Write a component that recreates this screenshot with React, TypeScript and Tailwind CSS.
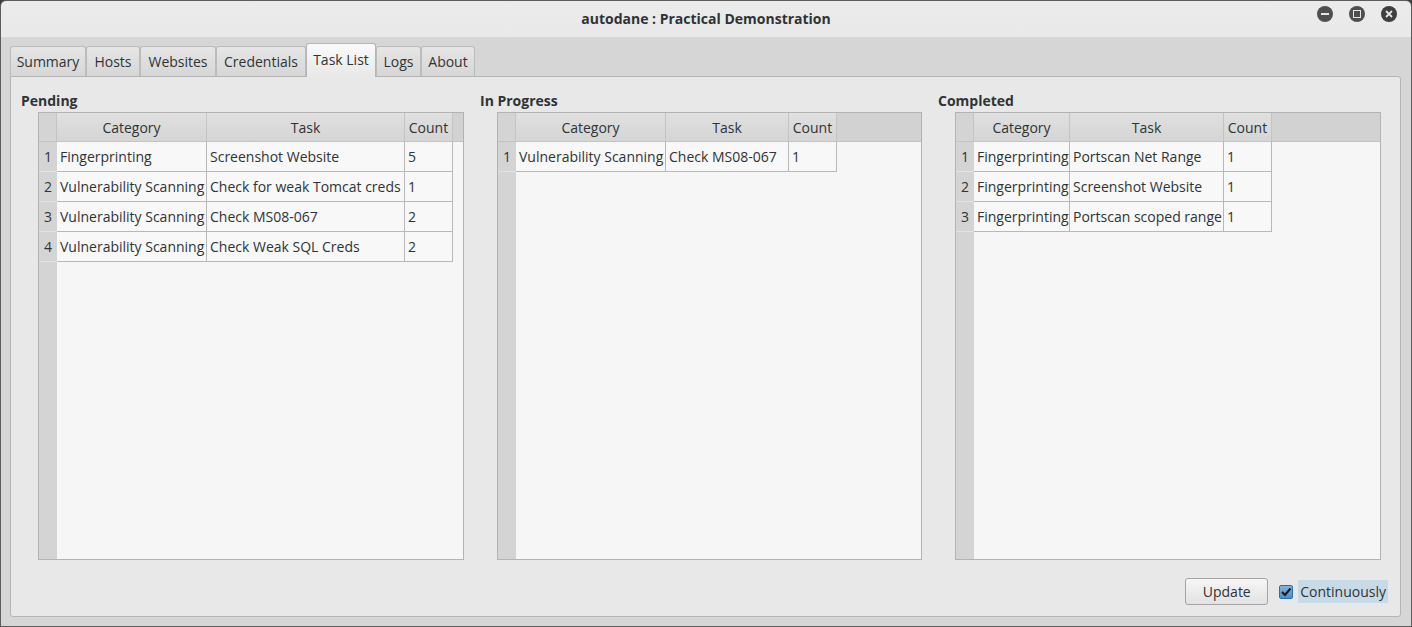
import React from "react";

type Row = { cat: string; task: string; count: string };

/* ------------------------------------------------------------------ */
/*  Data                                                               */
/* ------------------------------------------------------------------ */
const TABS: { label: string; w: number }[] = [
    { label: "Summary", w: 76 },
    { label: "Hosts", w: 54 },
    { label: "Websites", w: 76 },
    { label: "Credentials", w: 90 },
    { label: "Task List", w: 70 },
    { label: "Logs", w: 45 },
    { label: "About", w: 54 },
];

const PENDING: Row[] = [
    { cat: "Fingerprinting", task: "Screenshot Website", count: "5" },
    { cat: "Vulnerability Scanning", task: "Check for weak Tomcat creds", count: "1" },
    { cat: "Vulnerability Scanning", task: "Check MS08-067", count: "2" },
    { cat: "Vulnerability Scanning", task: "Check Weak SQL Creds", count: "2" },
];
const PROGRESS: Row[] = [{ cat: "Vulnerability Scanning", task: "Check MS08-067", count: "1" }];
const DONE: Row[] = [
    { cat: "Fingerprinting", task: "Portscan Net Range", count: "1" },
    { cat: "Fingerprinting", task: "Screenshot Website", count: "1" },
    { cat: "Fingerprinting", task: "Portscan scoped range", count: "1" },
];

/* ------------------------------------------------------------------ */
/*  Task table (QTableWidget look)                                     */
/* ------------------------------------------------------------------ */
function TaskTable({ rows, cols }: { rows: Row[]; cols: [number, number, number] }) {
    return (
        <div className="flex flex-col h-[448px] border border-[#b3b3b3] bg-[#f6f6f6] overflow-hidden">
            {/* header */}
            <div className="flex h-[29px] shrink-0 bg-gradient-to-b from-[#e0e0e0] to-[#d5d5d5] border-b border-[#c4c4c4]">
                <div className="w-[18px] shrink-0 bg-[#d4d4d4] border-r border-[#c4c4c4]" />
                {["Category", "Task", "Count"].map((h, i) => (
                    <div key={h}
                        className="shrink-0 flex items-center justify-center border-r border-[#c4c4c4] text-[#2e3436]"
                        style={{ width: cols[i] }}>
                        {h}
                    </div>
                ))}
                <div className="flex-1 bg-[#d2d2d2]" />
            </div>

            {/* rows */}
            {rows.map((r, i) => (
                <div key={i} className="flex h-[30px] shrink-0">
                    <div className="w-[18px] shrink-0 flex items-center justify-center bg-[#d4d4d4] border-b border-[#e2e2e2] text-[#2e3436]">
                        {i + 1}
                    </div>
                    {[r.cat, r.task, r.count].map((v, j) => (
                        <div key={j}
                            className="shrink-0 flex items-center pl-[3px] bg-[#f8f8f8] border-r border-b border-[#b8b8b8] text-[#2e3436] whitespace-nowrap"
                            style={{ width: cols[j] }}>
                            {v}
                        </div>
                    ))}
                </div>
            ))}

            {/* empty area */}
            <div className="flex flex-1">
                <div className="w-[18px] shrink-0 bg-[#d4d4d4]" />
            </div>
        </div>
    );
}

function Section({ title, rows, cols }: { title: string; rows: Row[]; cols: [number, number, number] }) {
    return (
        <div className="flex flex-col">
            <div className="h-[23px] font-bold text-[#2e3436] leading-[23px] -mt-[1px]">{title}</div>
            <div className="pl-[17px]">
                <TaskTable rows={rows} cols={cols} />
            </div>
        </div>
    );
}

/* ------------------------------------------------------------------ */
/*  Window                                                             */
/* ------------------------------------------------------------------ */
export default function App() {
    return (
        <div className="w-[1412px] h-[627px] overflow-hidden bg-[#3c3c3c] text-[14px]"
            style={{ fontFamily: "'Open Sans', 'Noto Sans', sans-serif" }}>
            <div className="relative w-full h-full flex flex-col rounded-t-[6px] border border-[#5c5c5c] bg-gradient-to-b from-[#ebebeb] via-[#dadada] to-[#d6d6d6]">

                {/* ========== TITLE BAR ========== */}
                <div className="h-[36px] shrink-0 flex items-center justify-center relative">
                    <span className="font-bold text-[#2e3436] text-[14px] -mt-[1px]">autodane : Practical Demonstration</span>
                    <div className="absolute right-[14px] top-[5px] flex gap-[16px]">
                        {/* minimize */}
                        <div className="w-[16px] h-[16px] rounded-full bg-[#4f4f4f] flex items-center justify-center">
                            <div className="w-[8px] h-[2px] bg-[#e5e5e5]" />
                        </div>
                        {/* maximize */}
                        <div className="w-[16px] h-[16px] rounded-full bg-[#4f4f4f] flex items-center justify-center">
                            <div className="w-[8px] h-[8px] border-[1.5px] border-[#e5e5e5]" />
                        </div>
                        {/* close */}
                        <div className="w-[16px] h-[16px] rounded-full bg-[#3f3f3f] flex items-center justify-center">
                            <svg width="8" height="8" viewBox="0 0 8 8">
                                <path d="M1 1 L7 7 M7 1 L1 7" stroke="#e5e5e5" strokeWidth="1.8" />
                            </svg>
                        </div>
                    </div>
                </div>

                {/* ========== TABS ========== */}
                <div className="flex items-end h-[39px] shrink-0 pl-[9px] bg-[#d6d6d6]">
                    {TABS.map((t) => {
                        const active = t.label === "Task List";
                        return active ? (
                            <div key={t.label}
                                className="h-[34px] -mb-[1px] flex items-center justify-center rounded-t-[3px] border border-b-0 border-[#b4b4b4] bg-gradient-to-b from-[#fafafa] to-[#e8e8e8] text-[#2e3436] relative z-10 pb-[3px]"
                                style={{ width: t.w }}>
                                {t.label}
                            </div>
                        ) : (
                            <div key={t.label}
                                className="h-[30px] flex items-center justify-center rounded-t-[3px] border border-b-0 border-[#bcbcbc] bg-gradient-to-b from-[#e6e6e6] to-[#d6d6d6] text-[#2e3436]"
                                style={{ width: t.w }}>
                                {t.label}
                            </div>
                        );
                    })}
                </div>

                {/* ========== PANE ========== */}
                <div className="flex-1 flex bg-[#d6d6d6] pl-[9px] pr-[10px] pb-[9px]">
                    <div className="flex-1 flex flex-col border border-[#b4b4b4] rounded-b-[3px] rounded-tr-[3px] bg-[#e8e8e8] pl-[10px] pr-[18px] pt-[13px]">
                        <div className="grid grid-cols-[443px_442px_443px] gap-x-[16px]">
                            <Section title="Pending" rows={PENDING} cols={[150, 198, 48]} />
                            <Section title="In Progress" rows={PROGRESS} cols={[150, 123, 48]} />
                            <Section title="Completed" rows={DONE} cols={[96, 154, 48]} />
                        </div>

                        {/* bottom bar */}
                        <div className="flex items-center justify-end mt-[18px] gap-[11px] -mr-[6px]">
                            <button className="w-[83px] h-[27px] rounded-[3px] border border-[#a4a4a4] bg-gradient-to-b from-[#f6f6f6] to-[#e2e2e2] text-[#2e3436]">
                                Update
                            </button>
                            <div className="flex items-center gap-[5px]">
                                <div className="w-[14px] h-[14px] rounded-[2px] border border-[#2d6ea8] bg-gradient-to-b from-[#7fb4e0] to-[#4a8fcf] flex items-center justify-center">
                                    <svg width="12" height="12" viewBox="0 0 12 12">
                                        <path d="M2 6 L5 9 L10.5 2.5" stroke="#1c1c1c" strokeWidth="2.2" fill="none" />
                                    </svg>
                                </div>
                                <span className="h-[23px] px-[2px] flex items-center bg-[#c7dbe6] text-[#2e3436]">Continuously</span>
                            </div>
                        </div>
                    </div>
                </div>
            </div>
        </div>
    );
}
